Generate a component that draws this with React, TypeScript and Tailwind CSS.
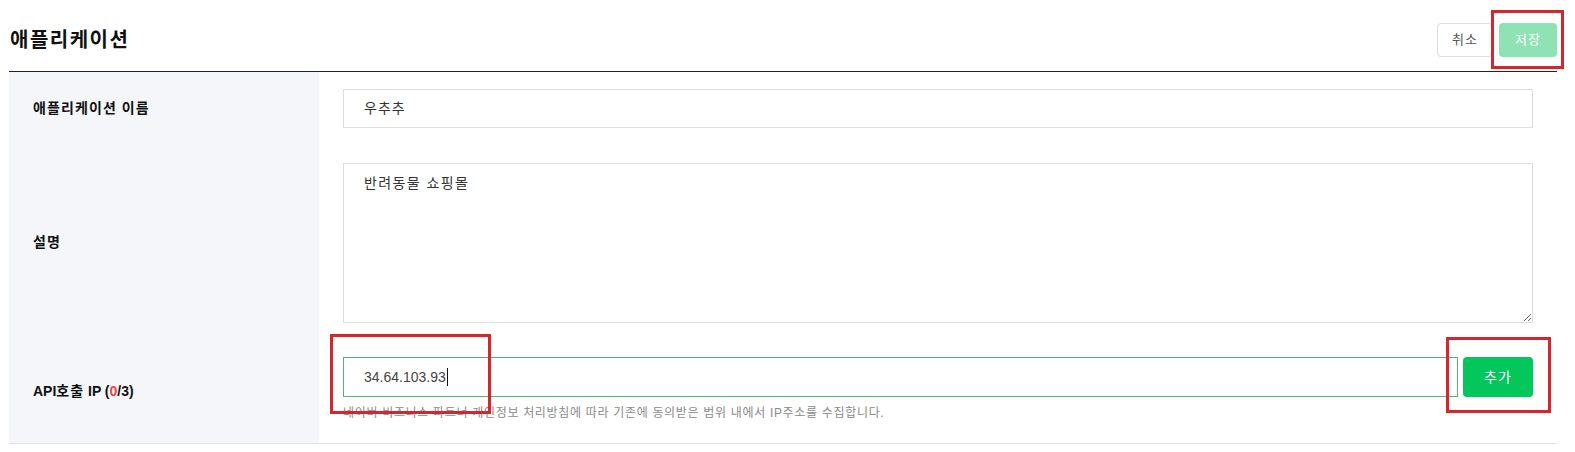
import React from "react";

const font = "font-['Liberation_Sans','Noto_Sans_CJK_KR',sans-serif]";

function RedMark({ className }: { className: string }) {
  return <div className={`pointer-events-none absolute border-[3px] border-[#d3272d] ${className}`} />;
}

function Row({ label, children, className = "" }: { label: React.ReactNode; children: React.ReactNode; className?: string }) {
  return (
    <div className="grid grid-cols-[310px_1fr]">
      <div className="flex items-center bg-[#f4f6f9] pl-6 text-[14px] font-bold text-[#111]">{label}</div>
      <div className={`px-6 ${className}`}>{children}</div>
    </div>
  );
}

export default function App() {
  return (
    <div className={`min-h-[452px] bg-white ${font}`}>
      <div className="ml-[9px] w-[1548px]">
        <div className="flex h-[71px] items-center justify-between pt-[9px]">
          <h1 className="pl-px text-[20px] font-bold tracking-[1.5px] text-[#111]">애플리케이션</h1>
          <div className="flex gap-[6px]">
            <button className="h-[34px] w-[56px] rounded-sm border border-[#dddddd] bg-white text-[13px] tracking-[1px] text-[#555]">
              취소
            </button>
            <div className="relative">
              <button className="h-[34px] w-[58px] rounded-sm bg-[#8fe2b4] text-[13px] tracking-[1px] text-white">저장</button>
              <RedMark className="-top-[13px] -right-[7px] -bottom-[12px] -left-[8px]" />
            </div>
          </div>
        </div>
        <div className="border-t border-[#222]">
          <Row label={<span className="tracking-[1.1px]">애플리케이션 이름</span>} className="py-[17px]">
            <div className="flex h-[39px] items-center border border-[#dddddd] pl-5 text-[14px] tracking-[1px] text-[#333]">
              우추추
            </div>
          </Row>
          <Row label={<span className="tracking-[1px]">설명</span>} className="pt-[18px] pb-[17px]">
            <textarea
              readOnly
              defaultValue="반려동물 쇼핑몰"
              className="block h-[160px] w-full border border-[#dddddd] px-5 pt-[9px] text-[14px] leading-5 tracking-[1.4px] text-[#333] outline-none"
            />
          </Row>
          <div className="border-b border-[#e2e2e2]">
            <Row
              label={
                <span>
                  API<span className="tracking-[1px]">호출</span> IP (<span className="text-[#f0434b]">0</span>/3)
                </span>
              }
              className="pt-[17px] pb-[22px]"
            >
              <div className="flex gap-[5px]">
                <div className="relative flex-1">
                  <div className="flex h-[40px] items-center border border-[#55b572] pl-5 text-[14px] text-[#444]">
                    34.64.103.93
                    <span className="ml-px inline-block h-[18px] w-px bg-[#111]" />
                  </div>
                  <RedMark className="-top-[23px] -left-[13px] h-[80px] w-[161px]" />
                </div>
                <div className="relative">
                  <button className="h-[40px] w-[70px] rounded-sm bg-[#03c75a] text-[14px] tracking-[1px] text-white">추가</button>
                  <RedMark className="-top-[20px] -right-[18px] -bottom-[16px] -left-[17px]" />
                </div>
              </div>
              <p className="mt-2 text-[12px] leading-4 tracking-[0.68px] text-[#8a8a8a]">
                네이버 비즈니스 파트너 개인정보 처리방침에 따라 기존에 동의받은 범위 내에서 IP주소를 수집합니다.
              </p>
            </Row>
          </div>
        </div>
      </div>
    </div>
  );
}
